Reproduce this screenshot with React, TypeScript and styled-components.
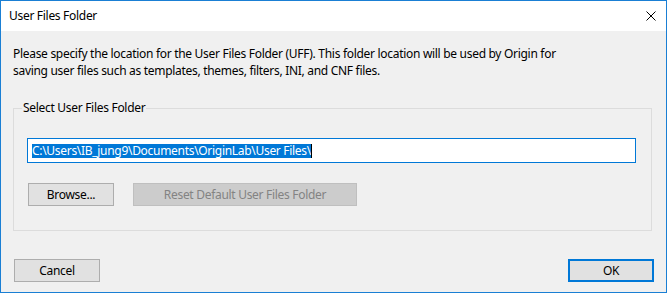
import { createGlobalStyle, styled } from 'styled-components';

const GlobalStyle = createGlobalStyle`
  html, body {
    margin: 0;
    padding: 0;
    background: #ffffff;
  }
  * {
    box-sizing: border-box;
  }
`;

const Window = styled.div`
  width: 667px;
  height: 293px;
  border: 1px solid #1a7fd4;
  background: #f0f0f0;
  display: flex;
  flex-direction: column;
  font-family: 'Noto Sans', 'Open Sans', sans-serif;
  font-size: 12px;
  letter-spacing: -0.3px;
  color: #000000;
`;

const TitleBar = styled.div`
  height: 30px;
  flex: none;
  background: #ffffff;
  display: flex;
  align-items: center;
  justify-content: space-between;
  padding: 0 10px 0 8px;
`;

const Title = styled.span`
  font-size: 12px;
  line-height: 16px;
`;

const CloseIcon = styled.svg`
  width: 10px;
  height: 10px;
  display: block;
`;

const Body = styled.div`
  flex: 1;
  display: flex;
  flex-direction: column;
  padding: 14px 14px 0 12px;
`;

const Description = styled.p`
  margin: 0;
  line-height: 17px;
`;

const GroupBox = styled.fieldset`
  margin: 21px 0 0 0;
  padding: 22px 15px 24px 13px;
  border: 1px solid #dcdcdc;
  min-width: 0;
`;

const GroupLegend = styled.legend`
  margin-left: -5px;
  padding: 0 1px;
  line-height: 16px;
`;

const PathField = styled.div`
  height: 25px;
  border: 1px solid #0078d7;
  background: #ffffff;
  display: flex;
  align-items: center;
  padding-left: 4px;
`;

const Selected = styled.span`
  background: #0078d7;
  color: #ffffff;
  line-height: 14px;
`;

const Caret = styled.span`
  width: 1px;
  height: 14px;
  background: #000000;
`;

const ButtonRow = styled.div`
  display: flex;
  gap: 19px;
  margin-top: 20px;
  padding-left: 1px;
`;

const Button = styled.button<{ $width: number; $primary?: boolean }>`
  width: ${(p) => p.$width}px;
  height: 23px;
  margin: 0;
  padding: 0;
  font-family: inherit;
  font-size: 12px;
  letter-spacing: -0.3px;
  color: #000000;
  background: #e1e1e1;
  border: ${(p) => (p.$primary ? '2px solid #0078d7' : '1px solid #adadad')};

  &:disabled {
    background: #cccccc;
    border-color: #bfbfbf;
    color: #838383;
  }
`;

const Footer = styled.div`
  display: flex;
  justify-content: space-between;
  padding: 0 12px 10px 13px;
`;

export default function App() {
  return (
    <>
      <GlobalStyle />
      <Window>
        <TitleBar>
          <Title>User Files Folder</Title>
          <CloseIcon viewBox="0 0 10 10">
            <path d="M0.5 0.5 L9.5 9.5 M9.5 0.5 L0.5 9.5" stroke="#000" strokeWidth="1" />
          </CloseIcon>
        </TitleBar>
        <Body>
          <Description>
            Please specify the location for the User Files Folder (UFF). This folder location will be used by Origin for
            <br />
            saving user files such as templates, themes, filters, INI, and CNF files.
          </Description>
          <GroupBox>
            <GroupLegend>Select User Files Folder</GroupLegend>
            <PathField>
              <Selected>C:\Users\IB_jung9\Documents\OriginLab\User Files\</Selected>
              <Caret />
            </PathField>
            <ButtonRow>
              <Button $width={86}>Browse...</Button>
              <Button $width={224} disabled>
                Reset Default User Files Folder
              </Button>
            </ButtonRow>
          </GroupBox>
        </Body>
        <Footer>
          <Button $width={86}>Cancel</Button>
          <Button $width={86} $primary>
            OK
          </Button>
        </Footer>
      </Window>
    </>
  );
}
